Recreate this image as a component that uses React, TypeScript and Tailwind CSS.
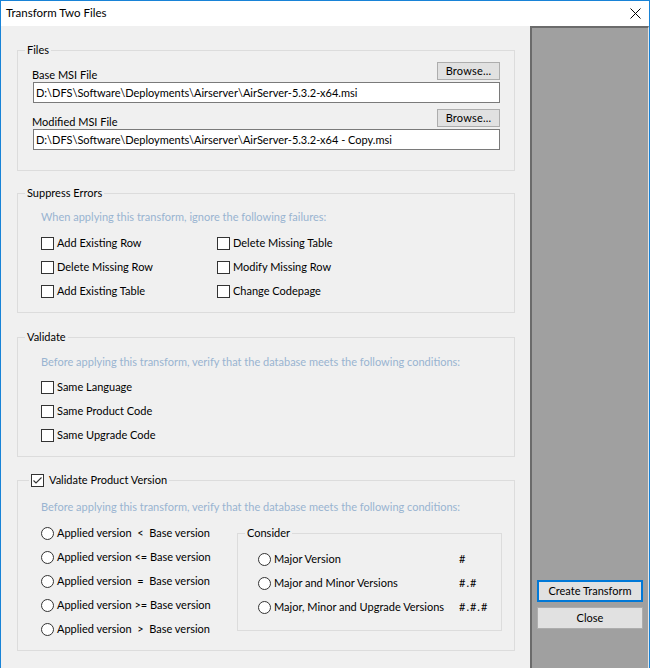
import React from "react";

function CheckBox({ checked = false }: { checked?: boolean }) {
  return (
    <span className="w-[13px] h-[13px] border border-[#333333] bg-white flex items-center justify-center shrink-0">
      {checked && (
        <svg width="11" height="11" viewBox="0 0 11 11">
          <path d="M1.5 5.5 L4 8 L9.5 2.5" fill="none" stroke="#333333" strokeWidth="1.1" />
        </svg>
      )}
    </span>
  );
}

function Radio() {
  return <span className="w-[13px] h-[13px] rounded-full border border-[#333333] bg-white shrink-0" />;
}

function CheckRow({ label }: { label: string }) {
  return (
    <div className="flex items-center h-[24px] gap-[3px]">
      <CheckBox />
      <span className="leading-[16px] whitespace-nowrap">{label}</span>
    </div>
  );
}

function RadioRow({ label }: { label: string }) {
  return (
    <div className="flex items-center h-[24px] gap-[3px]">
      <Radio />
      <span className="leading-[16px] whitespace-pre">{label}</span>
    </div>
  );
}

function BrowseRow({ label }: { label: string }) {
  return (
    <div className="flex items-end justify-between h-[18px]">
      <span className="leading-[16px] -mb-[3px]">{label}</span>
      <button className="w-[63px] h-[18px] bg-[#e1e1e1] border border-[#adadad] flex items-center justify-center leading-[14px] tracking-[0.2px]">
        Browse...
      </button>
    </div>
  );
}

function PathBox({ value }: { value: string }) {
  return (
    <div className="ml-[1px] h-[21px] border border-[#7a7a7a] bg-white pl-[2px] flex items-center whitespace-nowrap overflow-hidden leading-[16px]">
      {value}
    </div>
  );
}

export default function App() {
  return (
    <div className="w-[650px] h-[668px] bg-[#f0f0f0] border-l border-r border-t border-[#1883d7] flex flex-col overflow-hidden text-[11px] text-black font-['Lato',sans-serif]">
      <div className="h-[25px] bg-white flex items-center justify-between pl-[5px] shrink-0">
        <span className="leading-[16px] text-[11.5px] -mt-[1px]">Transform Two Files</span>
        <svg width="11" height="11" viewBox="0 0 11 11" className="mr-[8px]">
          <path d="M0.5 0.5 L10.5 10.5 M10.5 0.5 L0.5 10.5" stroke="#000" strokeWidth="1" />
        </svg>
      </div>
      <div className="flex-1 flex">
        <div className="w-[529px] shrink-0 pl-[16px] pr-[15px] pt-[16px] flex flex-col">
          {/* Files */}
          <fieldset className="border border-[#dcdcdc]">
            <legend className="ml-[7px] px-[2px] leading-[16px]">Files</legend>
            <div className="px-[14px] pt-[4px] pb-[20px]">
              <BrowseRow label="Base MSI File" />
              <div className="mt-[2px]">
                <PathBox value="D:\DFS\Software\Deployments\Airserver\AirServer-5.3.2-x64.msi" />
              </div>
              <div className="mt-[6px]">
                <BrowseRow label="Modified MSI File" />
              </div>
              <div className="mt-[2px]">
                <PathBox value="D:\DFS\Software\Deployments\Airserver\AirServer-5.3.2-x64 - Copy.msi" />
              </div>
            </div>
          </fieldset>

          {/* Suppress Errors */}
          <fieldset className="border border-[#dcdcdc] mt-[14px]">
            <legend className="ml-[7px] px-[2px] leading-[16px]">Suppress Errors</legend>
            <div className="pl-[23px] pt-[8px] pb-[9px]">
              <div className="text-[#99b4d1] leading-[16px]">
                When applying this transform, ignore the following failures:
              </div>
              <div className="mt-[6px] grid grid-cols-[176px_1fr]">
                <CheckRow label="Add Existing Row" />
                <CheckRow label="Delete Missing Table" />
                <CheckRow label="Delete Missing Row" />
                <CheckRow label="Modify Missing Row" />
                <CheckRow label="Add Existing Table" />
                <CheckRow label="Change Codepage" />
              </div>
            </div>
          </fieldset>

          {/* Validate */}
          <fieldset className="border border-[#dcdcdc] mt-[16px]">
            <legend className="ml-[7px] px-[2px] leading-[16px]">Validate</legend>
            <div className="pl-[23px] pt-[9px] pb-[9px]">
              <div className="text-[#99b4d1] leading-[16px]">
                Before applying this transform, verify that the database meets the following conditions:
              </div>
              <div className="mt-[5px] flex flex-col">
                <CheckRow label="Same Language" />
                <CheckRow label="Same Product Code" />
                <CheckRow label="Same Upgrade Code" />
              </div>
            </div>
          </fieldset>

          {/* Validate Product Version */}
          <fieldset className="border border-[#dcdcdc] mt-[15px]">
            <legend className="ml-[11px] px-[2px] leading-[16px] flex items-center gap-[5px]">
              <CheckBox checked />
              <span>Validate Product Version</span>
            </legend>
            <div className="pl-[23px] pt-[11px] pb-[9px]">
              <div className="text-[#99b4d1] leading-[16px]">
                Before applying this transform, verify that the database meets the following conditions:
              </div>
              <div className="mt-[6px] flex items-start">
                <div className="w-[196px] shrink-0 flex flex-col">
                  <RadioRow label="Applied version  <  Base version" />
                  <RadioRow label="Applied version <= Base version" />
                  <RadioRow label="Applied version  =  Base version" />
                  <RadioRow label="Applied version >= Base version" />
                  <RadioRow label="Applied version  >  Base version" />
                </div>
                <fieldset className="border border-[#dcdcdc] w-[265px] mt-[4px]">
                  <legend className="ml-[7px] px-[2px] leading-[16px]">Consider</legend>
                  <div className="pl-[20px] pt-[6px] pb-[11px] flex flex-col">
                    {[
                      ["Major Version", "#"],
                      ["Major and Minor Versions", "#.#"],
                      ["Major, Minor and Upgrade Versions", "#.#.#"],
                    ].map(([l, h]) => (
                      <div key={l} className="flex items-center h-[24px]">
                        <Radio />
                        <span className="ml-[3px] w-[185px] leading-[16px] whitespace-nowrap">{l}</span>
                        <span className="leading-[16px] tracking-[1px]">{h}</span>
                      </div>
                    ))}
                  </div>
                </fieldset>
              </div>
            </div>
          </fieldset>
        </div>

        <div className="flex-1 bg-[#a0a0a0] border-l-2 border-t-2 border-r border-l-[#6b6b6b] border-t-[#6b6b6b] border-r-[#e6e6e6] flex flex-col justify-end gap-[5px] px-[5px] pb-[39px]">
          <button className="h-[22px] bg-[#e1e1e1] border-2 border-[#0078d7] flex items-center justify-center leading-[16px]">
            Create Transform
          </button>
          <button className="h-[22px] bg-[#e1e1e1] border border-[#adadad] flex items-center justify-center leading-[16px]">
            Close
          </button>
        </div>
      </div>
    </div>
  );
}
